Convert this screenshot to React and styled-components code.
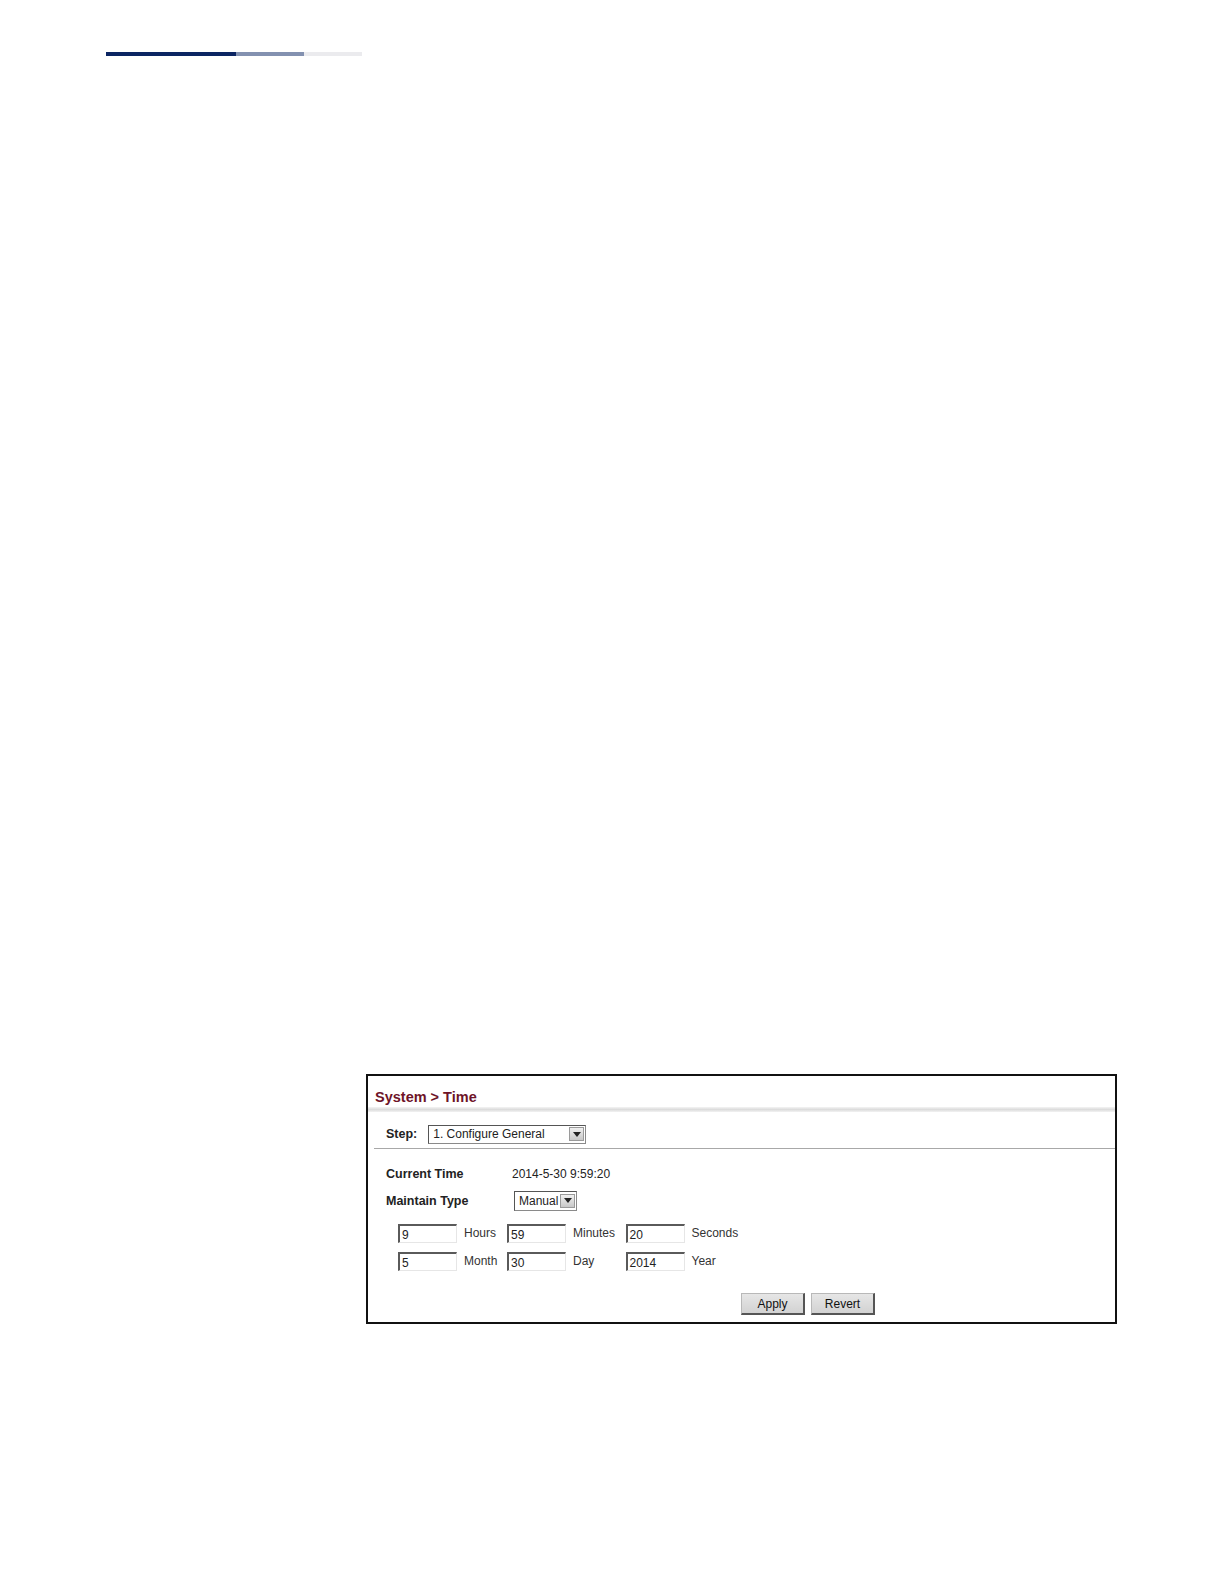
import React from 'react';
import styled, { createGlobalStyle } from 'styled-components';

const GlobalStyle = createGlobalStyle`
    html, body {
        margin: 0;
        padding: 0;
        background: #ffffff;
    }
    body {
        font-family: "Liberation Sans", Arial, sans-serif;
    }
`

const Page = styled.div`
    padding-top: 52px;
`

const HeaderRule = styled.div`
    display: flex;
    margin-left: 106px;
    height: 4px;
`

const RuleSegment = styled.div`
    width: ${props => props.w}px;
    background: ${props => props.color};
`

const Figure = styled.div`
    box-sizing: border-box;
    margin: 1018px 0 0 366px;
    width: 751px;
    height: 250px;
    border: 2px solid #111111;
    background: #ffffff;
    display: flex;
    flex-direction: column;
`

const TitleBar = styled.div`
    height: 31px;
    display: flex;
    align-items: center;
    padding: 10px 0 0 7px;
    box-sizing: border-box;
    font-size: 14.5px;
    font-weight: bold;
    color: #6e1428;
`

const Shadow = styled.div`
    height: 5px;
    background: linear-gradient(to bottom, #f4f4f4, #dcdcdc 50%, #f2f2f2);
`

const StepRow = styled.div`
    height: 37px;
    display: flex;
    align-items: center;
    gap: 11px;
    padding: 8px 0 0 12px;
    margin-left: 6px;
    border-bottom: 1px solid #a8a8a8;
    box-sizing: border-box;
`

const BoldLabel = styled.span`
    font-size: 12.5px;
    font-weight: bold;
    color: #222222;
    width: ${props => (props.w ? `${props.w}px` : 'auto')};
`

const Select = styled.div`
    box-sizing: border-box;
    width: ${props => props.w}px;
    height: ${props => props.h}px;
    display: flex;
    align-items: center;
    justify-content: space-between;
    border: 1px solid #8a8a8a;
    border-top-color: #555555;
    border-left-color: #555555;
    padding: 0 1px 0 4px;
    font-size: 12px;
    color: #222222;
    background: #ffffff;
`

const ArrowButton = styled.span`
    box-sizing: border-box;
    width: 15px;
    height: 14px;
    display: flex;
    align-items: center;
    justify-content: center;
    background: linear-gradient(to bottom, #f0f0f0, #c8c8c8);
    border: 1px solid #9a9a9a;
`

const Content = styled.div`
    display: flex;
    flex-direction: column;
    padding: 16px 0 0 18px;
`

const InfoRow = styled.div`
    display: flex;
    align-items: center;
    height: ${props => props.h}px;
`

const Value = styled.span`
    font-size: 12px;
    color: #222222;
`

const FieldGrid = styled.div`
    display: grid;
    grid-template-columns: 59px 50px 59px 59.5px 59px auto;
    row-gap: 9px;
    margin: 6px 0 0 12px;
    align-items: center;
`

const TextBox = styled.div`
    box-sizing: border-box;
    width: 59px;
    height: 19px;
    border: 1px solid #e6e6e6;
    border-top: 2px solid #5a5a5a;
    border-left: 2px solid #5a5a5a;
    font-size: 12px;
    color: #222222;
    padding: 3px 0 0 2px;
    line-height: 13px;
`

const UnitLabel = styled.span`
    font-size: 12px;
    color: #333333;
    padding-left: 7px;
    margin-top: -1px;
`

const ButtonBar = styled.div`
    display: flex;
    gap: 6px;
    margin: 22px 0 0 355px;
`

const Button = styled.div`
    box-sizing: border-box;
    width: 64px;
    height: 22px;
    display: flex;
    align-items: center;
    justify-content: center;
    font-size: 12px;
    color: #111111;
    background: linear-gradient(to bottom, #e6e6e6, #d2d2d2);
    border: 1px solid #b8b8b8;
    border-right: 2px solid #555555;
    border-bottom: 2px solid #555555;
`

const DownArrow = () => (
    <svg width="8" height="5" viewBox="0 0 8 5">
        <path d="M0 0 L8 0 L4 5 Z" fill="#222222" />
    </svg>
)

const fields = [
    [['9', 'Hours'], ['59', 'Minutes'], ['20', 'Seconds']],
    [['5', 'Month'], ['30', 'Day'], ['2014', 'Year']],
]

function App() {
    return (
        <>
            <GlobalStyle />
            <Page>
                <HeaderRule>
                    <RuleSegment w={130} color="#0b2562" />
                    <RuleSegment w={68} color="#8391b0" />
                    <RuleSegment w={58} color="#ebebee" />
                </HeaderRule>

                <Figure>
                    <TitleBar>System &gt; Time</TitleBar>
                    <Shadow />
                    <StepRow>
                        <BoldLabel>Step:</BoldLabel>
                        <Select w={158} h={19}>
                            1. Configure General
                            <ArrowButton><DownArrow /></ArrowButton>
                        </Select>
                    </StepRow>

                    <Content>
                        <InfoRow h={18}>
                            <BoldLabel w={126}>Current Time</BoldLabel>
                            <Value>2014-5-30 9:59:20</Value>
                        </InfoRow>
                        <InfoRow h={35}>
                            <BoldLabel w={128}>Maintain Type</BoldLabel>
                            <Select w={63} h={20}>
                                Manual
                                <ArrowButton><DownArrow /></ArrowButton>
                            </Select>
                        </InfoRow>

                        <FieldGrid>
                            {fields.map(row => row.map(([val, unit]) => (
                                <React.Fragment key={unit}>
                                    <TextBox>{val}</TextBox>
                                    <UnitLabel>{unit}</UnitLabel>
                                </React.Fragment>
                            )))}
                        </FieldGrid>

                        <ButtonBar>
                            <Button>Apply</Button>
                            <Button>Revert</Button>
                        </ButtonBar>
                    </Content>
                </Figure>
            </Page>
        </>
    )
}

export default App
